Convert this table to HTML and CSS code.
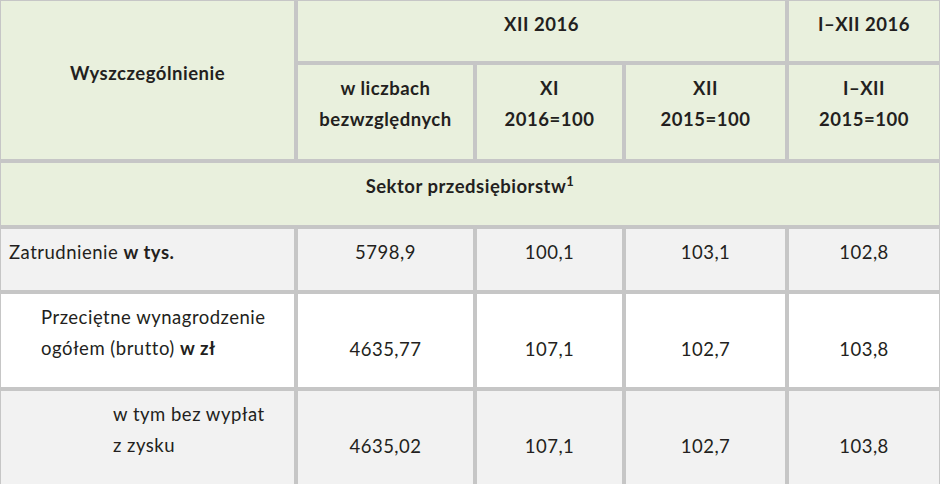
FILE: index.html
```html
<!DOCTYPE html>
<html lang="pl">
<head>
<meta charset="utf-8">
<title>Zatrudnienie i wynagrodzenie</title>
<link rel="stylesheet" href="styles.css">
</head>
<body>
<table class="stats">
  <colgroup>
    <col class="c1"><col class="c2"><col class="c3"><col class="c4"><col class="c5">
  </colgroup>
  <thead>
    <tr class="r1">
      <th class="head mid" rowspan="2">Wyszczególnienie</th>
      <th class="head" colspan="3">XII 2016</th>
      <th class="head">I–XII 2016</th>
    </tr>
    <tr class="r2">
      <th class="head">w liczbach<br>bezwzględnych</th>
      <th class="head">XI<br>2016=100</th>
      <th class="head">XII<br>2015=100</th>
      <th class="head">I–XII<br>2015=100</th>
    </tr>
  </thead>
  <tbody>
    <tr class="r3">
      <th class="head" colspan="5">Sektor przedsiębiorstw<sup>1</sup></th>
    </tr>
    <tr class="r4 grey">
      <td class="label">Zatrudnienie <b>w tys.</b></td>
      <td class="num">5798,9</td>
      <td class="num">100,1</td>
      <td class="num">103,1</td>
      <td class="num">102,8</td>
    </tr>
    <tr class="r5 white">
      <td class="label ind1">Przeciętne wynagrodzenie<br>ogółem (brutto) <b>w zł</b></td>
      <td class="num">4635,77</td>
      <td class="num">107,1</td>
      <td class="num">102,7</td>
      <td class="num">103,8</td>
    </tr>
    <tr class="r6 grey">
      <td class="label ind2">w tym bez wypłat<br>z zysku</td>
      <td class="num">4635,02</td>
      <td class="num">107,1</td>
      <td class="num">102,7</td>
      <td class="num">103,8</td>
    </tr>
  </tbody>
</table>
</body>
</html>
```
FILE: styles.css
```css
html, body {
  margin: 0;
  padding: 0;
  overflow: hidden;
  background: #ffffff;
}

body {
  font-family: Lato, "Open Sans", sans-serif;
  font-size: 18.5px;
  letter-spacing: 0.5px;
  color: #231f20;
}

.stats {
  table-layout: fixed;
  width: 946px;
  margin: -3px 0 0 -3px;
  border-collapse: separate;
  border-spacing: 4px;
  background: #c6c6c6;
  line-height: 31px;
}

.c1 { width: 293px; }
.c2 { width: 175px; }
.c3 { width: 145px; }
.c4 { width: 159px; }
.c5 { width: 150px; }

th, td {
  padding: 8px 8px 21px;
  vertical-align: bottom;
}

.head {
  background: #e9f0dd;
  font-weight: 700;
  text-align: center;
  vertical-align: top;
}

.head.mid {
  vertical-align: middle;
  padding-bottom: 22px;
}

.head sup {
  font-size: 13px;
  line-height: 0;
  vertical-align: 7px;
}

.r1 { height: 60px; }
.r2 { height: 94px; }
.r3 { height: 62px; }
.r4 { height: 61px; }
.r5 { height: 93px; }
.r6 { height: 93px; }

.grey td { background: #f2f2f2; }
.white td { background: #ffffff; }

.label {
  text-align: left;
  vertical-align: top;
}

.label b { font-weight: 700; }

.ind1 { padding-left: 40px; }
.ind2 { padding-left: 112px; }

.num {
  text-align: center;
  vertical-align: bottom;
  padding-bottom: 22px;
}
```
